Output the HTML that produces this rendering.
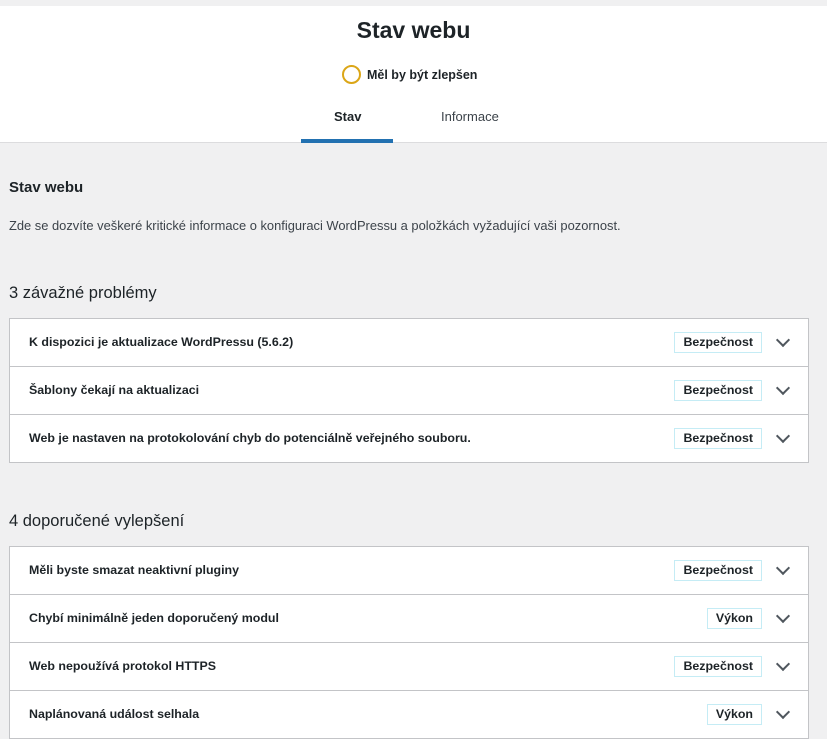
<!DOCTYPE html>
<html><head><meta charset="utf-8"><style>
body{margin:0;width:827px;height:721px;overflow:hidden;background:#f0f0f1;font-family:"Liberation Sans",Arial,sans-serif;color:#1d2327}
.hdr{position:absolute;top:6px;left:0;width:827px;height:136px;background:#fff;border-bottom:1px solid #dcdcde}
h1{position:absolute;top:11px;left:0;width:827px;text-align:center;margin:0;font-size:23px;font-weight:bold;color:#1d2327}
.st{position:absolute;top:59px;left:342px;font-size:12.5px;font-weight:bold;display:flex;align-items:center}
.st i{border:2px solid #dba617;border-radius:50%;margin-right:6px;box-sizing:border-box;width:19px;height:19px}
.tab{position:absolute;top:103px;font-size:13px}
.ul{position:absolute;left:301px;top:133px;width:92px;height:4px;background:#2271b1}
.t{position:absolute;left:9px;margin:0}
.box{position:absolute;left:9px;width:798px;background:#fff;border:1px solid #c3c4c7}
.row{height:47px;border-bottom:1px solid #c3c4c7;position:relative;font-size:12.4px;font-weight:bold}
.row:last-child{border-bottom:none}
.row span.l{position:absolute;left:19px;top:16px}
.b{position:absolute;right:46px;top:13px;border:1px solid #c5ecf5;padding:2px 8px;font-size:12.4px;height:15px;line-height:15px}
.c{position:absolute;right:20px;top:16px;width:8px;height:8px;border-right:2px solid #50575e;border-bottom:2px solid #50575e;transform:rotate(45deg)}
</style></head><body>
<div class="hdr">
<h1>Stav webu</h1>
<div class="st"><i></i>Měl by být zlepšen</div>
<div class="tab" style="left:334px;font-weight:bold">Stav</div>
<div class="tab" style="left:441px;color:#3c434a">Informace</div>
<div class="ul"></div>
</div>
<div class="t" style="top:179px;font-size:15px;font-weight:bold">Stav webu</div>
<div class="t" style="top:218px;font-size:12.9px;color:#3c434a">Zde se dozvíte veškeré kritické informace o konfiguraci WordPressu a položkách vyžadující vaši pozornost.</div>
<div class="t" style="top:284px;font-size:16.5px;color:#1d2327">3 závažné problémy</div>
<div class="box" style="top:318px">
<div class="row"><span class="l">K dispozici je aktualizace WordPressu (5.6.2)</span><span class="b">Bezpečnost</span><i class="c"></i></div>
<div class="row"><span class="l">Šablony čekají na aktualizaci</span><span class="b">Bezpečnost</span><i class="c"></i></div>
<div class="row"><span class="l">Web je nastaven na protokolování chyb do potenciálně veřejného souboru.</span><span class="b">Bezpečnost</span><i class="c"></i></div>
</div>
<div class="t" style="top:512px;font-size:16.5px;color:#1d2327">4 doporučené vylepšení</div>
<div class="box" style="top:546px">
<div class="row"><span class="l">Měli byste smazat neaktivní pluginy</span><span class="b">Bezpečnost</span><i class="c"></i></div>
<div class="row"><span class="l">Chybí minimálně jeden doporučený modul</span><span class="b">Výkon</span><i class="c"></i></div>
<div class="row"><span class="l">Web nepoužívá protokol HTTPS</span><span class="b">Bezpečnost</span><i class="c"></i></div>
<div class="row"><span class="l">Naplánovaná událost selhala</span><span class="b">Výkon</span><i class="c"></i></div>
</div>
</body></html>
